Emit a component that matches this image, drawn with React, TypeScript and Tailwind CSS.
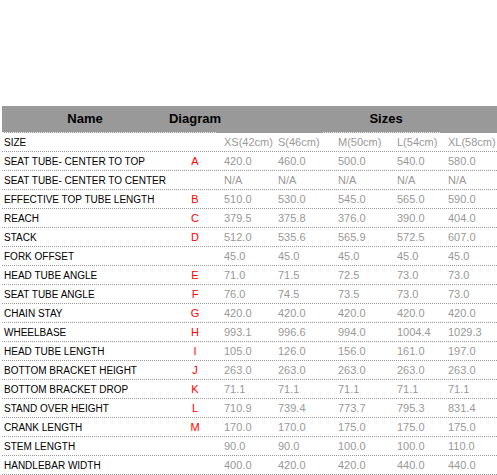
const rows: [string, string, string[]][] = [
  ['SIZE', '', ['XS(42cm)', 'S(46cm)', 'M(50cm)', 'L(54cm)', 'XL(58cm)']],
  ['SEAT TUBE- CENTER TO TOP', 'A', ['420.0', '460.0', '500.0', '540.0', '580.0']],
  ['SEAT TUBE- CENTER TO CENTER', '', ['N/A', 'N/A', 'N/A', 'N/A', 'N/A']],
  ['EFFECTIVE TOP TUBE LENGTH', 'B', ['510.0', '530.0', '545.0', '565.0', '590.0']],
  ['REACH', 'C', ['379.5', '375.8', '376.0', '390.0', '404.0']],
  ['STACK', 'D', ['512.0', '535.6', '565.9', '572.5', '607.0']],
  ['FORK OFFSET', '', ['45.0', '45.0', '45.0', '45.0', '45.0']],
  ['HEAD TUBE ANGLE', 'E', ['71.0', '71.5', '72.5', '73.0', '73.0']],
  ['SEAT TUBE ANGLE', 'F', ['76.0', '74.5', '73.5', '73.0', '73.0']],
  ['CHAIN STAY', 'G', ['420.0', '420.0', '420.0', '420.0', '420.0']],
  ['WHEELBASE', 'H', ['993.1', '996.6', '994.0', '1004.4', '1029.3']],
  ['HEAD TUBE LENGTH', 'I', ['105.0', '126.0', '156.0', '161.0', '197.0']],
  ['BOTTOM BRACKET HEIGHT', 'J', ['263.0', '263.0', '263.0', '263.0', '263.0']],
  ['BOTTOM BRACKET DROP', 'K', ['71.1', '71.1', '71.1', '71.1', '71.1']],
  ['STAND OVER HEIGHT', 'L', ['710.9', '739.4', '773.7', '795.3', '831.4']],
  ['CRANK LENGTH', 'M', ['170.0', '170.0', '175.0', '175.0', '175.0']],
  ['STEM LENGTH', '', ['90.0', '90.0', '100.0', '100.0', '110.0']],
  ['HANDLEBAR WIDTH', '', ['400.0', '420.0', '420.0', '440.0', '440.0']],
];

const sizeCols = ['w-[54px]', 'w-[60px]', 'w-[59px]', 'w-[51px]', 'w-[51px]'];

export default function App() {
  return (
    <div className="w-[497px] h-[475px] bg-white overflow-hidden pt-[106px] pl-[2px] font-['Liberation_Sans',Arial,sans-serif]">
      {/* header */}
      <div className="h-[27px] bg-[#999999] flex flex-col overflow-hidden">
        <div className="h-[26px] flex items-center text-[13px] font-bold text-black">
          <div className="w-[166px] shrink-0 text-center">Name</div>
          <div className="w-[54px] shrink-0 text-center">Diagram</div>
          <div className="w-[328px] shrink-0 text-center">Sizes</div>
        </div>
        <div className="h-px flex">
          <div className="w-[214px] border-b border-dotted border-[#eeeeee]" />
          <div className="w-[107px]" />
          <div className="w-[117px] border-b border-dotted border-[#eeeeee]" />
        </div>
      </div>
      {/* body */}
      {rows.map(([name, letter, vals]) => (
        <div key={name} className="h-[19px] flex items-center border-b border-dotted border-[#999999]">
          <div className="w-[166px] shrink-0 pl-[2px] text-[10px] text-black whitespace-nowrap">{name}</div>
          <div className="w-[54px] shrink-0 text-center text-[11px] text-[#ff0000]">{letter}</div>
          {vals.map((v, i) => (
            <div key={i} className={`${sizeCols[i]} shrink-0 pl-[2px] text-[11px] text-[#999999] whitespace-nowrap`}>
              {v}
            </div>
          ))}
        </div>
      ))}
    </div>
  );
}
